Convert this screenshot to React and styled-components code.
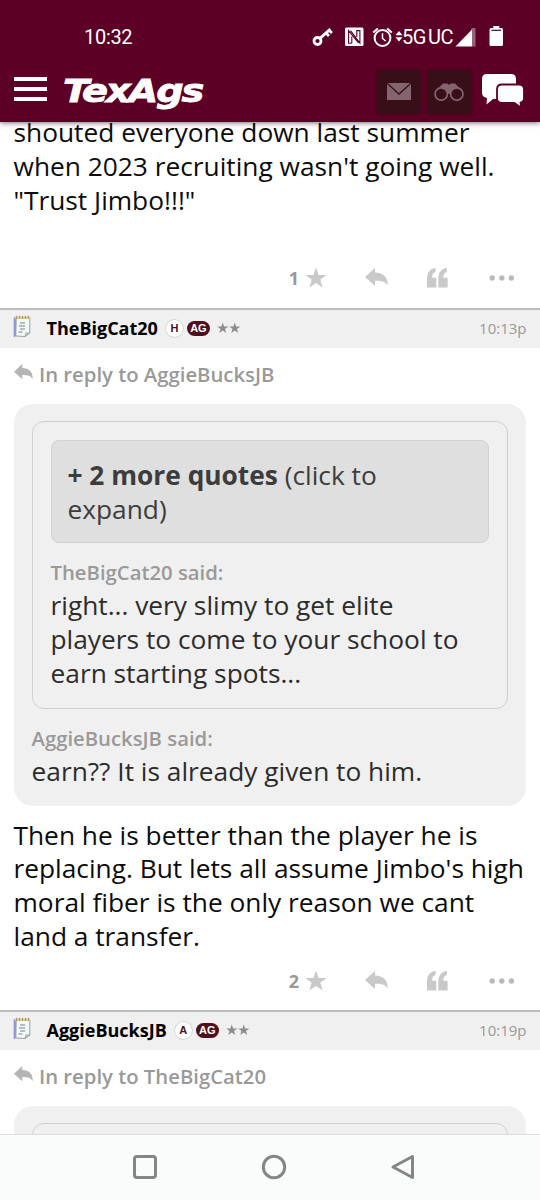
import styled, { createGlobalStyle } from "styled-components";

const GlobalStyle = createGlobalStyle`
    * {
        box-sizing: border-box;
    }
    body {
        margin: 0;
        background: #fff;
        font-family: "Open Sans", "Noto Sans", sans-serif;
    }
    svg {
        display: block;
        flex: none;
    }
`
const Screen = styled.div`
    display: flex;
    flex-direction: column;
    width: 540px;
    height: 1200px;
    overflow: hidden;
    background: #fff;
`
const Top = styled.header`
    flex: none;
    height: 122px;
    background: #5c0025;
    color: #fff;
    box-shadow: 0 1px 5px rgba(0, 0, 0, 0.55);
    z-index: 1;
`
const StatusBar = styled.div`
    display: flex;
    align-items: center;
    height: 74px;
    padding: 0 36px 0 84px;
    font-family: Roboto, sans-serif;
    font-size: 20px;
`
const Clock = styled.span`
    flex: 1;
    letter-spacing: -0.3px;
`
const Network = styled.span`
    width: 51px;
    margin: 0 1px 0 -3px;
    white-space: nowrap;
    letter-spacing: -0.6px;
    word-spacing: -2px;
`
const TitleBar = styled.div`
    display: flex;
    align-items: center;
    height: 48px;
    padding: 0 15px 0 14px;
`
const Burger = styled.div`
    display: flex;
    flex-direction: column;
    justify-content: space-between;
    width: 33px;
    height: 24px;
    margin-top: -18px;
`
const Bar = styled.i`
    height: 4px;
    background: #fff;
`
const Logo = styled.div`
    flex: 1;
    margin: -14px 0 0 16px;
    font-family: "DejaVu Sans", sans-serif;
    font-size: 32.5px;
    font-weight: 700;
    font-style: italic;
    line-height: 40px;
    letter-spacing: -1.8px;
    -webkit-text-stroke: 0.8px #fff;
    transform: scaleX(1.18);
    transform-origin: left;
`
const HeadButton = styled.div`
    display: flex;
    align-items: center;
    justify-content: center;
    width: 44px;
    height: 44px;
    margin: -13px 6px 0 0;
    border-radius: 2px;
    background: #380e18;
    box-shadow: 0 0 3px #380e18;
`
const ChatButton = styled.div`
    margin: -14px 0 0 4px;
`
const Feed = styled.main`
    flex: 1;
    min-height: 0;
    overflow: hidden;
`
const Body = styled.div`
    padding: ${p => p.$pad || "0 13.5px"};
    color: ${p => p.$color || "#0c0c0c"};
    font-size: 26.3px;
    line-height: 33.6px;
    white-space: nowrap;
`
const Cut = styled.div`
    margin-top: -5.7px;
`
const Actions = styled.div`
    display: flex;
    align-items: center;
    justify-content: flex-end;
    height: ${p => p.$height}px;
    padding: ${p => p.$top}px 25px ${p => p.$bottom || 0}px 0;
    color: #c9c9c9;
`
const Votes = styled.span`
    margin-right: 6px;
    color: #999;
    font-size: 18px;
    font-weight: 700;
    line-height: 24px;
`
const Spacer = styled.span`
    width: ${p => p.$w}px;
`
const PostHead = styled.div`
    display: flex;
    align-items: center;
    height: 40px;
    padding: 0 13.5px 1px 12.5px;
    border-top: 2px solid #bcbcbc;
    background: #f0f0f0;
`
const User = styled.span`
    margin: 0 8px 0 16px;
    color: #000;
    font-size: 18px;
    font-weight: 700;
`
const Badge = styled.span`
    display: flex;
    align-items: center;
    justify-content: center;
    width: ${p => (p.$solid ? 23 : 17)}px;
    height: ${p => (p.$solid ? 15 : 17)}px;
    margin-right: ${p => (p.$solid ? 7 : 4)}px;
    border-radius: 9px;
    background: ${p => (p.$solid ? "#500f1c" : "#fff")};
    box-shadow: ${p => (p.$solid ? "none" : "0 0 0 0.7px #ccc")};
    color: ${p => (p.$solid ? "#fff" : "#500f1c")};
    font: 700 11px "Liberation Sans", sans-serif;
`
const Time = styled.span`
    margin-left: auto;
    color: #999;
    font-size: 15px;
`
const ReplyTo = styled.div`
    display: flex;
    align-items: center;
    gap: 6px;
    height: 56px;
    padding: 0 14px;
    color: #999;
    font-size: 20.3px;
    font-weight: 600;
    white-space: nowrap;
    svg {
        margin-top: -6px;
        color: #b5b5b5;
    }
    span {
        margin-top: -4px;
    }
`
const Quote = styled.section`
    height: 402px;
    margin: 0 14px 0 13.5px;
    padding: 17.5px 18px 0;
    border-radius: 19px;
    background: #f0f0f0;
`
const Inner = styled.div`
    height: 288px;
    padding: 18px;
    border: 1.5px solid #d0d0d0;
    border-radius: 12px;
`
const More = styled.div`
    height: 103px;
    padding: 17.6px 16px;
    border: 1.5px solid #d2d2d2;
    border-radius: 8px;
    background: #dfdfdf;
    b {
        font-weight: 700;
    }
`
const Said = styled.div`
    margin-top: 15px;
    color: #999;
    font-size: 20.3px;
    font-weight: 600;
    line-height: 28px;
    white-space: nowrap;
`
const NavBar = styled.nav`
    display: flex;
    align-items: center;
    flex: none;
    height: 66px;
    padding: 0 0 2px 132px;
    gap: 103px;
    border-top: 1.5px solid #dcdddd;
    background: #fafcfb;
`

const Star = ({ size }) => (
    <svg width={size} height={size} viewBox="0 0 22 22" fill="currentColor">
        <path d="M11 0.5l2.6 7.4h8l-6.3 4.9 2.4 7.8L11 16l-6.7 4.6 2.4-7.8L.4 7.9h8z" />
    </svg>
)
const ReplyArrow = ({ w = 23, h = 20 }) => (
    <svg width={w} height={h} viewBox="0 0 23 20" fill="currentColor" preserveAspectRatio="none">
        <path d="M0 9L10 0v4.6C18 5 23 8.5 22.6 17.5 20 13.5 16 12.7 10 12.9V18z" />
    </svg>
)
const QuoteMark = () => (
    <svg width="21" height="20" viewBox="0 0 21 20" fill="currentColor">
        <path d="M8.6 0v4C6 4.6 5.2 6.2 5.1 9.8h4.2v9.7H0V11C0 4.3 3 .5 8.6 0z" />
        <path d="M19.9 0v4c-2.6.6-3.4 2.2-3.5 5.8h4.2v9.7h-9.3V11C11.3 4.3 14.3.5 19.9 0z" />
    </svg>
)
const Dots = () => (
    <svg width="26" height="6" viewBox="0 0 26 6" fill="#b9b9b9">
        <circle cx="3.2" cy="3" r="2.7" />
        <circle cx="12.8" cy="3" r="2.7" />
        <circle cx="22.4" cy="3" r="2.7" />
    </svg>
)
const NotepadIcon = styled.svg`
    margin-top: -4px;
`
const Notepad = () => (
    <NotepadIcon width="18" height="23" viewBox="0 0 18 23">
        <path d="M1 2.5l3 .5L3 20.5 1 22z" fill="#9a9cdf" stroke="#8486c4" strokeWidth=".6" />
        <path d="M3.2 2.5H16.8V18L12 21.5 2.8 21z" fill="#f2f7f7" stroke="#8f979b" strokeWidth=".9" />
        <path d="M12 21.5l.8-3.7 3.7.2z" fill="#c3d0d0" stroke="#8b9595" strokeWidth=".6" />
        <path d="M1.8 1.5H17V4H1.8z" fill="#dccb94" />
        <path d="M3.5 .8v3M6.5 .8v3M9.5 .8v3M12.5 .8v3M15.5 .8v3" stroke="#9c8656" strokeWidth=".8" />
        <path d="M7 8h5M6 11h6M7 14h5M5.5 17h4" stroke="#75848d" strokeWidth="1.1" />
    </NotepadIcon>
)
const StatusIcons = () => (
    <svg width="93" height="24" viewBox="0 0 93 24" fill="none" stroke="#fff">
        <circle cx="5.5" cy="16" r="3.5" strokeWidth="2.8" />
        <path d="M8 13.4L18.4 4M14 8l3 3M17 5.3l3 2.8" strokeWidth="2.8" />
        <rect x="33" y="2.5" width="18.5" height="18.5" rx="1.5" fill="#fff" stroke="none" />
        <path d="M39.8 18.2H36.6V5.6L46.5 17.8M38.5 5.6L47.9 18.2V5.6H44.8V12M39.8 11.5V18.2" stroke="#5c0025" strokeWidth="1.1" />
        <circle cx="70.5" cy="13" r="7.9" strokeWidth="2" />
        <path d="M70.5 8.3v5.2l3.2 2.5" strokeWidth="1.5" />
        <path d="M61.2 7.6l4.7-4.2M75.1 3.4l4.7 4.2" strokeWidth="2" />
        <path d="M87 6l3.5 4.3h-7zM87 16.5l3.5-4.3h-7z" fill="#fff" stroke="none" />
    </svg>
)
const Signal = () => (
    <svg width="50" height="24" viewBox="0 0 50 24">
        <path d="M17.5 3H21.5V21.5H17.5z" fill="#9a6078" />
        <path d="M1.5 21.5L18 4.5v17z" fill="#fff" />
        <path d="M39.3 1h6v2H47.5q1.5 0 1.5 1.5v15q0 1.5-1.5 1.5H37q-1.5 0-1.5-1.5v-15Q35.5 3 37 3h2.3z" fill="#fff" />
        <path d="M37.5 5.3h9.5" stroke="#5c0025" strokeWidth="1.2" />
    </svg>
)
const Mail = () => (
    <svg width="24" height="17" viewBox="0 0 24 17" fill="#836470">
        <path d="M0 0h24v17H0z" />
        <path d="M0 0l12 11L24 0" fill="none" stroke="#380e18" strokeWidth="1.6" />
        <path d="M.8 0h22.4L12 9.8z" />
    </svg>
)
const Binoculars = () => (
    <svg width="30" height="20" viewBox="0 0 30 20">
        <path d="M2.5 8L9 1.5h4.5L15 3l1.5-1.5H21L27.5 8 15 12z" fill="#836470" />
        <circle cx="7.2" cy="12" r="6.2" fill="#380e18" stroke="#836470" strokeWidth="1.7" />
        <circle cx="22.8" cy="12" r="6.2" fill="#380e18" stroke="#836470" strokeWidth="1.7" />
    </svg>
)
const Chat = () => (
    <svg width="44" height="36" viewBox="0 0 44 36" fill="#fff">
        <path d="M6 1H30q5 0 5 5v15q0 5-5 5H12l-6.5 5.5.5-6.5Q1 24 1 20V6q0-5 5-5z" />
        <path d="M21 11.5H38q5 0 5 5V25q0 4-3.5 4.7l.8 5-7-4.7H21q-5 0-5-5v-8.5q0-5 5-5z" stroke="#5c0025" strokeWidth="1.8" />
    </svg>
)

function ActionRow({ votes, height, top, bottom }) {
    return (
        <Actions $height={height} $top={top} $bottom={bottom}>
            <Votes>{votes}</Votes>
            <Star size={22} />
            <Spacer $w={38} />
            <ReplyArrow />
            <Spacer $w={39} />
            <QuoteMark />
            <Spacer $w={41} />
            <Dots />
        </Actions>
    );
}

function Header({ user, letter, time }) {
    return (
        <PostHead>
            <Notepad />
            <User>{user}</User>
            <Badge>{letter}</Badge>
            <Badge $solid>AG</Badge>
            <svg width="24" height="12" viewBox="0 0 46 22" fill="#8d8d8d">
                <path d="M11 .5l2.6 7.4h8l-6.3 4.9 2.4 7.8L11 16l-6.7 4.6 2.4-7.8L.4 7.9h8z" />
                <path d="M34 .5l2.6 7.4h8l-6.3 4.9 2.4 7.8L34 16l-6.7 4.6 2.4-7.8-6.3-4.9h8z" />
            </svg>
            <Time>{time}</Time>
        </PostHead>
    );
}

function InReply({ to }) {
    return (
        <ReplyTo>
            <ReplyArrow w={19} h={17} />
            <span>In reply to {to}</span>
        </ReplyTo>
    );
}

export default function App(){
    return(
        <Screen>
            <GlobalStyle />
            <Top>
                <StatusBar>
                    <Clock>10:32</Clock>
                    <StatusIcons />
                    <Network>5G UC</Network>
                    <Signal />
                </StatusBar>
                <TitleBar>
                    <Burger><Bar /><Bar /><Bar /></Burger>
                    <Logo>TexAgs</Logo>
                    <HeadButton><Mail /></HeadButton>
                    <HeadButton><Binoculars /></HeadButton>
                    <ChatButton><Chat /></ChatButton>
                </TitleBar>
            </Top>
            <Feed>
                <Cut>
                    <Body>
                        shouted everyone down last summer<br />
                        when 2023 recruiting wasn't going well.<br />
                        "Trust Jimbo!!!"
                    </Body>
                </Cut>
                <ActionRow votes="1" height={90.9} top={31} />
                <Header user="TheBigCat20" letter="H" time="10:13p" />
                <InReply to="AggieBucksJB" />
                <Quote>
                    <Inner>
                        <More>
                            <Body $pad="0" $color="#3c3c3c">
                                <b>+ 2 more quotes</b> (click to<br />
                                expand)
                            </Body>
                        </More>
                        <Said>TheBigCat20 said:</Said>
                        <Body $pad="3px 0 0" $color="#2c2c2c">
                            right... very slimy to get elite<br />
                            players to come to your school to<br />
                            earn starting spots...
                        </Body>
                    </Inner>
                    <Said>AggieBucksJB said:</Said>
                    <Body $pad="3px 0 0" $color="#2c2c2c">earn?? It is already given to him.</Body>
                </Quote>
                <Body $pad="12.8px 13.5px 0">
                    Then he is better than the player he is<br />
                    replacing. But lets all assume Jimbo's high<br />
                    moral fiber is the only reason we cant<br />
                    land a transfer.
                </Body>
                <ActionRow votes="2" height={56.8} top={0} bottom={1.5} />
                <Header user="AggieBucksJB" letter="A" time="10:19p" />
                <InReply to="TheBigCat20" />
                <Quote>
                    <Inner />
                </Quote>
            </Feed>
            <NavBar>
                <svg width="26" height="26" viewBox="0 0 26 26" fill="none" stroke="#858585" strokeWidth="3">
                    <rect x="2.5" y="2.5" width="21" height="21" rx="2.5" />
                </svg>
                <svg width="26" height="26" viewBox="0 0 26 26" fill="none" stroke="#858585" strokeWidth="3">
                    <circle cx="13" cy="13" r="10.7" />
                </svg>
                <svg width="26" height="26" viewBox="0 0 26 26" fill="none" stroke="#858585" strokeWidth="3" strokeLinejoin="round">
                    <path d="M22.5 2.5v21L3 13z" />
                </svg>
            </NavBar>
        </Screen>
    );
}
